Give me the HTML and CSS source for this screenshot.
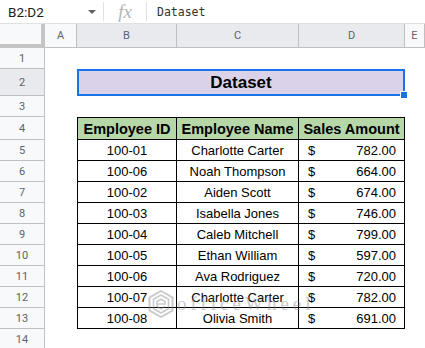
FILE: index.html
```html
<!DOCTYPE html>
<html lang="en">
<head>
    <meta charset="UTF-8">
    <meta name="viewport" content="width=device-width, initial-scale=1.0">
    <title>Dataset - Sheet</title>
    <link rel="stylesheet" href="styles.css">
</head>
<body>
    <div class="formula-bar">
        <div class="name-box">
            <span>B2:D2</span>
            <span class="caret"></span>
        </div>
        <div class="fx">fx</div>
        <div class="formula">Dataset</div>
    </div>

    <div class="sheet">
        <!-- column headers -->
        <div class="corner"></div>
        <div class="col-head">A</div>
        <div class="col-head sel">B</div>
        <div class="col-head sel">C</div>
        <div class="col-head sel">D</div>
        <div class="col-head">E</div>

        <!-- row 1 -->
        <div class="row-head">1</div>
        <div></div><div></div><div></div><div></div><div></div>

        <!-- row 2 -->
        <div class="row-head sel">2</div>
        <div></div>
        <div class="title-cell">Dataset<span class="handle"></span></div>
        <div></div>

        <!-- row 3 -->
        <div class="row-head">3</div>
        <div></div><div></div><div></div><div></div><div></div>

        <!-- row 4 -->
        <div class="row-head">4</div>
        <div></div>
        <div class="cell head first">Employee ID</div>
        <div class="cell head">Employee Name</div>
        <div class="cell head">Sales Amount</div>
        <div></div>

        <div class="row-head">5</div>
        <div></div>
        <div class="cell first">100-01</div>
        <div class="cell">Charlotte Carter</div>
        <div class="cell money"><span>$</span><span>782.00</span></div>
        <div></div>

        <div class="row-head">6</div>
        <div></div>
        <div class="cell first">100-06</div>
        <div class="cell">Noah Thompson</div>
        <div class="cell money"><span>$</span><span>664.00</span></div>
        <div></div>

        <div class="row-head">7</div>
        <div></div>
        <div class="cell first">100-02</div>
        <div class="cell">Aiden Scott</div>
        <div class="cell money"><span>$</span><span>674.00</span></div>
        <div></div>

        <div class="row-head">8</div>
        <div></div>
        <div class="cell first">100-03</div>
        <div class="cell">Isabella Jones</div>
        <div class="cell money"><span>$</span><span>746.00</span></div>
        <div></div>

        <div class="row-head">9</div>
        <div></div>
        <div class="cell first">100-04</div>
        <div class="cell">Caleb Mitchell</div>
        <div class="cell money"><span>$</span><span>799.00</span></div>
        <div></div>

        <div class="row-head">10</div>
        <div></div>
        <div class="cell first">100-05</div>
        <div class="cell">Ethan William</div>
        <div class="cell money"><span>$</span><span>597.00</span></div>
        <div></div>

        <div class="row-head">11</div>
        <div></div>
        <div class="cell first">100-06</div>
        <div class="cell">Ava Rodriguez</div>
        <div class="cell money"><span>$</span><span>720.00</span></div>
        <div></div>

        <div class="row-head">12</div>
        <div></div>
        <div class="cell first">100-07</div>
        <div class="cell">Charlotte Carter</div>
        <div class="cell money"><span>$</span><span>782.00</span></div>
        <div></div>

        <div class="row-head">13</div>
        <div></div>
        <div class="cell first">100-08</div>
        <div class="cell">Olivia Smith</div>
        <div class="cell money"><span>$</span><span>691.00</span></div>
        <div></div>

        <div class="row-head">14</div>
        <div></div><div></div><div></div><div></div><div></div>
    </div>

    <div class="watermark">
        <svg width="26" height="28" viewBox="0 0 26 28">
            <path d="M13 1 L24.5 7.5 L24.5 20.5 L13 27 L1.5 20.5 L1.5 7.5 Z" fill="none" stroke="#8a8a8a" stroke-width="2"/>
            <path d="M13 5 L20.5 9.3 L20.5 18.7 L13 23 L5.5 18.7 L5.5 9.3 Z" fill="none" stroke="#8a8a8a" stroke-width="1.6"/>
            <path d="M9 14 L17 14 L17 11.5 L13 9.2 L9 11.5 L9 16.5 L13 18.8 L17 16.5" fill="none" stroke="#8a8a8a" stroke-width="1.6"/>
        </svg>
        <span>officeWheel</span>
    </div>
</body>
</html>
```

FILE: styles.css
```css
body {
    margin: 0;
    background: #fff;
    font-family: Roboto, 'Liberation Sans', Arial, sans-serif;
    overflow: hidden;
    position: relative;
}

.formula-bar {
    height: 24px;
    box-sizing: border-box;
    display: flex;
    align-items: center;
    border-bottom: 1px solid #e1e1e1;
}

.name-box {
    width: 104px;
    box-sizing: border-box;
    padding: 0 7px 0 8px;
    display: flex;
    align-items: center;
    justify-content: space-between;
    border-right: 1px solid #e1e1e1;
    height: 19px;
    font-size: 13.5px;
    color: #202124;
}

.caret {
    width: 0;
    height: 0;
    border-left: 4px solid transparent;
    border-right: 4px solid transparent;
    border-top: 4px solid #5f6368;
}

.fx {
    width: 42px;
    height: 19px;
    border-right: 1px solid #e1e1e1;
    display: flex;
    align-items: center;
    justify-content: center;
    font-family: 'Liberation Serif', serif;
    font-style: italic;
    font-size: 19px;
    color: #b4b4b4;
}

.formula {
    padding-left: 10px;
    font-family: 'DejaVu Sans Mono', monospace;
    font-size: 11.5px;
    color: #333;
}

.sheet {
    display: grid;
    grid-template-columns: 45px 32px 100px 122px 106px 1fr;
    grid-template-rows: 24px 21px 27px 21px 23px repeat(10, 21px);
}

.corner {
    background: #f8f9fa;
    border-right: 4px solid #c4c4c4;
    border-bottom: 4px solid #c4c4c4;
}

.col-head {
    background: #f8f9fa;
    border-right: 1px solid #c0c0c0;
    border-bottom: 1px solid #c0c0c0;
    display: flex;
    align-items: center;
    justify-content: center;
    font-size: 11px;
    color: #5f6368;
}

.col-head:last-child {
    border-right: none;
}

.row-head {
    background: #f8f9fa;
    border-right: 1px solid #c0c0c0;
    border-bottom: 1px solid #c0c0c0;
    display: flex;
    align-items: center;
    justify-content: center;
    font-size: 11px;
    color: #5f6368;
}

.sel {
    background: #e8eaed;
}

.title-cell {
    grid-column: 3 / 6;
    position: relative;
    background: #d9d2e9;
    border: 2px solid #1a73e8;
    display: flex;
    align-items: center;
    justify-content: center;
    font-family: 'Liberation Sans', Arial, sans-serif;
    font-weight: bold;
    font-size: 17px;
    color: #000;
}

.handle {
    position: absolute;
    right: -5px;
    bottom: -5px;
    width: 6px;
    height: 6px;
    background: #1a73e8;
    border: 1px solid #fff;
}

.cell {
    border-right: 1px solid #000;
    border-bottom: 1px solid #000;
    display: flex;
    align-items: center;
    justify-content: center;
    font-family: 'Liberation Sans', Arial, sans-serif;
    font-size: 13px;
    color: #000;
}

.cell.first {
    border-left: 1px solid #000;
}

.cell.head {
    border-top: 1px solid #000;
    background: #b6d7a8;
    font-weight: bold;
    font-size: 14.5px;
}

.cell.money {
    justify-content: space-between;
    padding: 0 8px 0 9px;
}

.watermark {
    position: absolute;
    left: 148px;
    top: 290px;
    display: flex;
    align-items: center;
    gap: 3px;
    opacity: 0.45;
    pointer-events: none;
}

.watermark span {
    font-family: 'Liberation Serif', serif;
    font-size: 19px;
    letter-spacing: 4px;
    color: #8a8a8a;
}
```
